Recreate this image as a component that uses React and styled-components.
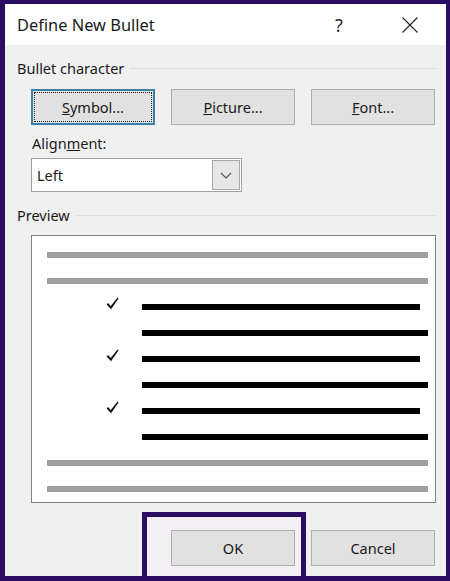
import React from "react"
import styled, {createGlobalStyle} from "styled-components"

const Global = createGlobalStyle`
  html, body { margin: 0; padding: 0; background: #2b0d66; }
  body { font-family: "Noto Sans", "Open Sans", sans-serif; color: #1a1a1a; }
`

const Frame = styled.div`
  width: 450px;
  height: 581px;
  box-sizing: border-box;
  border-style: solid;
  border-color: #2b0d66;
  border-width: 4px 4px 5px 5px;
  display: flex;
  flex-direction: column;
  background: #f0f0f0;
  overflow: hidden;
`

const TitleBar = styled.div`
  height: 41px;
  flex: none;
  background: #fff;
  display: flex;
  align-items: center;
  padding-left: 12px;
  font-size: 16.4px;
`

const Title = styled.div`
  flex: 1;
`

const Help = styled.div`
  width: 20px;
  font-size: 18px;
  color: #2a2a2a;
  margin-right: 53px;
  text-align: center;
`

const Close = styled.svg`
  width: 16px;
  height: 16px;
  margin-right: 28px;
`

const Body = styled.div`
  flex: 1;
  display: flex;
  flex-direction: column;
  padding: 0 10px 0 12px;
  font-size: 14.5px;
`

const GroupHeader = styled.div`
  display: flex;
  align-items: center;
  height: 20px;
  margin-top: ${p => p.$top}px;
`

const Rule = styled.div`
  flex: 1;
  height: 1px;
  background: #dcdcdc;
  margin-left: 6px;
`

const ButtonRow = styled.div`
  display: flex;
  gap: 16px;
  margin: 11px 0 0 14px;
`

const Button = styled.div`
  width: 124px;
  height: 36px;
  flex: none;
  box-sizing: border-box;
  margin-top: ${p => p.$offset || 0}px;
  background: #e1e1e1;
  border: ${p => p.$focus ? "2px solid #3a7fa6" : "1px solid #adadad"};
  display: flex;
  align-items: center;
  justify-content: center;
  position: relative;
  &::after {
    content: "";
    display: ${p => p.$focus ? "block" : "none"};
    position: absolute;
    inset: 1px;
    border: 1px dotted #222;
  }
`

const FieldLabel = styled.div`
  margin: 8px 0 0 15px;
  height: 20px;
  line-height: 20px;
`

const Select = styled.div`
  margin: 5px 0 0 14px;
  width: 211px;
  height: 34px;
  box-sizing: border-box;
  background: #fff;
  border: 1px solid #a0a0a0;
  display: flex;
  align-items: stretch;
`

const SelectValue = styled.div`
  flex: 1;
  display: flex;
  align-items: center;
  padding-left: 5px;
`

const SelectArrow = styled.div`
  width: 26px;
  margin: 1px;
  background: #e6e6e6;
  border: 1px solid #a8a8a8;
  display: flex;
  align-items: center;
  justify-content: center;
`

const PreviewBox = styled.div`
  margin: 10px 0 0 14px;
  width: 405px;
  height: 268px;
  box-sizing: border-box;
  background: #fff;
  border: 1px solid #828282;
  padding: 16px 7px 0 15px;
  display: flex;
  flex-direction: column;
  gap: 20px;
`

const LineRow = styled.div`
  display: flex;
  align-items: flex-end;
  height: 6px;
  padding-left: ${p => p.$indent}px;
  padding-right: ${p => p.$short ? 8 : 0}px;
`

const Bar = styled.div`
  flex: 1;
  height: 6px;
  background: ${p => p.$gray ? "#a0a0a0" : "#000"};
`

const Check = styled.svg`
  width: 13px;
  height: 13px;
  flex: none;
  margin: 0 23px 0 59px;
`

const Footer = styled.div`
  display: flex;
  justify-content: flex-end;
  align-items: flex-start;
  margin: 9px 1px 0 0;
  flex: 1;
`

const Highlight = styled.div`
  border: 5px solid #2b0d66;
  border-bottom: none;
  background: #f3eff4;
  padding: 13px 6px 10px 24px;
  margin-right: 5px;
`

const CheckMark = () => (
  <Check viewBox="0 0 13 13">
    <path d="M0.6 7.4 L2.1 6.1 L4.7 8.9 L11.6 0.6 L12.5 1.4 L5 12.3 Z" fill="#111" />
  </Check>
)

const lines = [
  {gray: true},
  {gray: true},
  {check: true, short: true},
  {},
  {check: true, short: true},
  {},
  {check: true, short: true},
  {},
  {gray: true},
  {gray: true},
]

export default function App() {
  return (
    <Frame>
      <Global />
      <TitleBar>
        <Title>Define New Bullet</Title>
        <Help>?</Help>
        <Close viewBox="0 0 16 16">
          <path d="M0.5 0.5 L15.5 15.5 M15.5 0.5 L0.5 15.5" stroke="#222" strokeWidth="1.1" />
        </Close>
      </TitleBar>
      <Body>
        <GroupHeader $top={13}>Bullet character<Rule /></GroupHeader>
        <ButtonRow>
          <Button $focus><span><u>S</u>ymbol...</span></Button>
          <Button><span><u>P</u>icture...</span></Button>
          <Button><span><u>F</u>ont...</span></Button>
        </ButtonRow>
        <FieldLabel>Align<u>m</u>ent:</FieldLabel>
        <Select>
          <SelectValue>Left</SelectValue>
          <SelectArrow>
            <svg width="12" height="7" viewBox="0 0 12 7">
              <path d="M1 1 L6 6 L11 1" fill="none" stroke="#555" strokeWidth="1.1" />
            </svg>
          </SelectArrow>
        </Select>
        <GroupHeader $top={13}>Preview<Rule /></GroupHeader>
        <PreviewBox>
          {lines.map((l, i) => (
            <LineRow key={i} $indent={l.gray ? 0 : l.check ? 0 : 95} $short={l.short}>
              {l.check && <CheckMark />}
              <Bar $gray={l.gray} />
            </LineRow>
          ))}
        </PreviewBox>
        <Footer>
          <Highlight>
            <Button>OK</Button>
          </Highlight>
          <Button $offset={18}>Cancel</Button>
        </Footer>
      </Body>
    </Frame>
  )
}
